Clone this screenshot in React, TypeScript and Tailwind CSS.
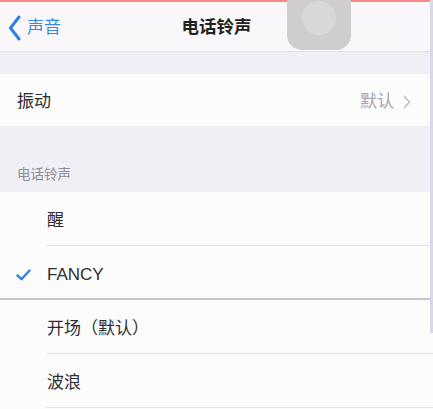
import React from "react";

const font = { fontFamily: '"Liberation Sans", "Noto Sans CJK SC", sans-serif' };

function Row({ label, checked, sep, sepFull }: { label: string; checked?: boolean; sep?: boolean; sepFull?: boolean }) {
  return (
    <div className="relative h-[54px] flex items-center bg-[#fdfcfd] pt-[4px]">
      <div className="w-[47px] flex items-center pl-[16px]">
        {checked && (
          <svg width="15" height="12" viewBox="0 0 15 12">
            <path d="M1.5 6.5 L5.5 10.2 L13.5 1.5" fill="none" stroke="#2f80e4" strokeWidth="2.4" strokeLinecap="round" strokeLinejoin="round" />
          </svg>
        )}
      </div>
      <span className="text-[17px] text-[#2e2e30]">{label}</span>
      {sep && <div className="absolute bottom-0 left-[47px] right-0 h-px bg-[#e6e4e8]" />}
      {sepFull && <div className="absolute bottom-0 left-0 right-0 h-[2px] bg-[#c6c5c9]" />}
    </div>
  );
}

export default function App() {
  return (
    <div className="relative w-[433px] h-[409px] overflow-hidden bg-[#fdfcfd]" style={font}>
      {/* nav */}
      <div className="h-[2px] bg-[#f28a8a]" />
      <div className="h-[50px] flex items-center relative bg-[#f9f7f9] border-b border-[#e2e0e4] pt-[2px]">
        <div className="flex items-center pl-[8px] gap-[6px] text-[#3a86e6]">
          <svg width="13" height="26" viewBox="0 0 13 26">
            <path d="M11 2 L2.5 13 L11 24" fill="none" stroke="#2f7fe4" strokeWidth="3" strokeLinecap="round" strokeLinejoin="round" />
          </svg>
          <span className="text-[17px] leading-none">声音</span>
        </div>
        <div className="absolute left-0 right-0 text-center text-[17.5px] font-bold text-[#222]">电话铃声</div>
      </div>
      <div className="h-[22px] bg-[#f0eff5]" />
      {/* vibration row */}
      <div className="h-[52px] flex items-center justify-between bg-[#fdfcfd] pl-[17px] pr-[22px] pt-[4px]">
        <span className="text-[17px] text-[#2e2e30]">振动</span>
        <div className="flex items-center gap-[9px]">
          <span className="text-[17px] text-[#a6a5aa]">默认</span>
          <svg width="8" height="14" viewBox="0 0 8 14">
            <path d="M1.5 1.5 L6.5 7 L1.5 12.5" fill="none" stroke="#c3c2c8" strokeWidth="1.8" strokeLinecap="round" strokeLinejoin="round" />
          </svg>
        </div>
      </div>
      {/* section header */}
      <div className="h-[66px] bg-[#f0eff5] flex items-end pl-[17px] pb-[7px]">
        <span className="text-[13.5px] text-[#8e8d93]">电话铃声</span>
      </div>
      <Row label="醒" sep />
      <Row label="FANCY" checked sepFull />
      <Row label="开场（默认）" sep />
      <Row label="波浪" sep />
      {/* right edge line */}
      <div className="absolute right-0 top-0 w-[3px] h-[333px] bg-[#d7dae6]" />
      {/* assistive touch */}
      <div className="absolute left-[287px] top-[-14px] w-[64px] h-[64px] rounded-[15px] bg-[#cfcdd0] flex items-center justify-center">
        <div className="w-[34px] h-[34px] rounded-full bg-[#d9d7da]" />
      </div>
    </div>
  );
}
